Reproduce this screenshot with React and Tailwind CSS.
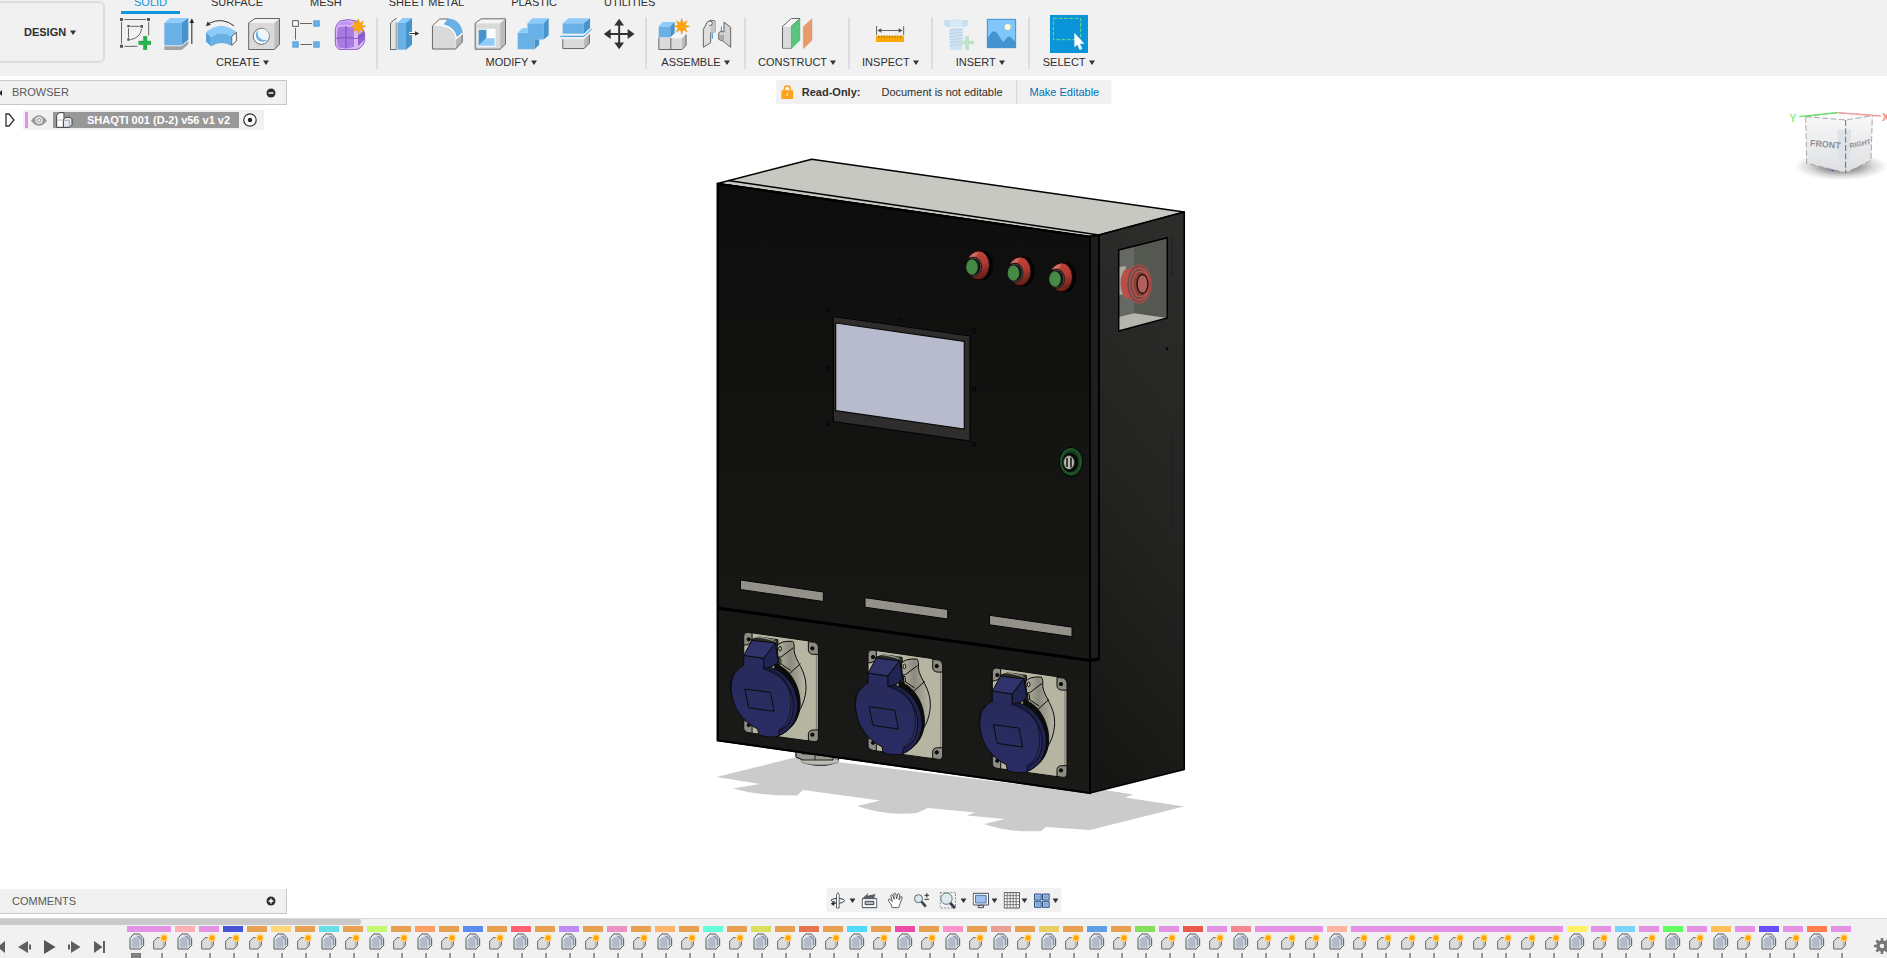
import React from "react";

const LIGHT = "#8ccbfa";
const MID = "#68b0e6";
const DARK = "#4793cc";

function Caret() {
  return (
    <svg width="6" height="5" viewBox="0 0 6 5" className="shrink-0" aria-hidden="true">
      <path d="M0 0.5h6L3 5z" fill="#333" />
    </svg>
  );
}

function starPoints(cx, cy, outer, inner) {
  const pts = [];
  for (let i = 0; i < 16; i++) {
    const r = i % 2 === 0 ? outer : inner;
    const a = (Math.PI / 8) * i;
    pts.push(`${(cx + r * Math.sin(a)).toFixed(1)},${(cy - r * Math.cos(a)).toFixed(1)}`);
  }
  return pts.join(" ");
}

function Tool({ label, box, children }) {
  return (
    <button type="button" aria-label={label} className="block size-8 shrink-0">
      <svg width="32" height="32" viewBox={box} aria-hidden="true">
        {children}
      </svg>
    </button>
  );
}

function Group({ label, pad = "px-2.5", children }) {
  return (
    <div className={`flex flex-col items-center ${pad}`}>
      <div className="mt-px flex h-8 items-center gap-[11px]">{children}</div>
      <button type="button" className="mt-1 flex items-center gap-[3px] leading-4">
        {label}
        <Caret />
      </button>
    </div>
  );
}

function Separator() {
  return <div className="h-[52px] w-[2px] shrink-0 bg-[#dcdcdc]" />;
}

function CreateGroup() {
  return (
    <Group label="CREATE">
      <Tool label="Create sketch" box="357 54 96 96">
        <g fill="#555">
          <path d="M360 54h9v9h-9zM441 54h9v9h-9zM360 134h9v9h-9zM382 75h7v7h-7zM421 75h8v8h-8zM382 115h7v7h-7z" />
        </g>
        <g fill="none" stroke="#666" strokeWidth="3">
          <path d="M373 58.500H438M446 66V106M364.500 66V131M373 139H412" />
          <path d="M391 79H419M385.500 85V113M425 86Q421 114 391 119" />
        </g>
        <path d="M430 109h11v14h13v11h-13v15h-11v-15h-14v-11h14z" fill="#25b24e" stroke="#1c9440" strokeWidth="1" />
      </Tool>
      <Tool label="Extrude" box="485 54 96 96">
        <path d="M492 139H544L564 123V133L544 150H492Z" fill="#a2a2a2" />
        <path d="M492 68H544V136H492Z" fill={MID} />
        <path d="M492 68L509 54H564L544 68Z" fill={LIGHT} />
        <path d="M544 68L564 54V119L544 136Z" fill={DARK} />
        <path d="M574.500 132V66" stroke="#222" strokeWidth="3" />
        <path d="M574.500 55L581 69H568Z" fill="#222" />
      </Tool>
      <Tool label="Bend" box="615 54 98 96">
        <path d="M704 77Q668 49 628 69" fill="none" stroke="#333" strokeWidth="3" />
        <path d="M618 78L623 64L633 74Z" fill="#333" />
        <path d="M618 97Q664 56 712 97L697 110Q664 88 634 112Z" fill={LIGHT} />
        <path d="M634 112Q664 88 696 110V138Q664 120 634 140Z" fill={MID} />
        <path d="M618 97L634 112V140L618 125Z" fill="#5aa3dc" />
        <path d="M697 109L711 97V124L697 137Z" fill="#fff" stroke="#555" strokeWidth="3" />
      </Tool>
      <Tool label="Hole" box="747 54 96 96">
        <path d="M749 69H826V149H749Z" fill="#dadada" />
        <path d="M749 69L768 55H842L826 69Z" fill="#f4f4f4" />
        <path d="M826 69L842 55V133L826 149Z" fill="#bcbcbc" />
        <path d="M749 149V69L768 55.500H841.500V133L826 148.500H749" fill="none" stroke="#666" strokeWidth="3" />
        <circle cx="787" cy="109" r="24" fill="#fff" stroke="#666" strokeWidth="3" />
        <path d="M775 92A20 20 0 1 0 806 118Q789 124 780 111Q775 102 777 91Z" fill={MID} />
        <path d="M777 91Q775 102 780 111Q789 124 806 118A20 20 0 0 0 777 91" fill="#eef6fc" />
      </Tool>
      <Tool label="Rectangular pattern" box="873 54 96 96">
        <path d="M878 62h17v17h-17z" fill="#fff" stroke="#555" strokeWidth="3" />
        <path d="M941 62h17v17h-17zM878 125h17v17h-17zM941 125h17v17h-17z" fill={MID} stroke="#4a94cf" strokeWidth="2" />
        <path d="M900 70.500H936M886.500 84V119M901 133.500H936" stroke="#666" strokeWidth="3" />
      </Tool>
      <Tool label="Create form" box="1002 54 96 96">
        <path d="M1022 62Q1046 55 1074 64L1094 98V122Q1088 144 1068 149H1020Q1004 144 1006 120V88Q1010 68 1022 62Z" fill="#d8baf6" stroke="#8c5cc4" strokeWidth="3" />
        <path d="M1014 82Q1040 76 1062 84V140Q1040 148 1014 142Q1008 112 1014 82Z" fill="#a87be2" />
        <path d="M1020 66Q1045 60 1060 68L1052 76Q1034 72 1014 78Z" fill="#c193f4" />
        <path d="M1074 104L1092 92V120L1074 138Z" fill="#9060d0" />
        <path d="M1038 78V146M1007 115Q1040 110 1070 116L1093 104" fill="none" stroke="#7645b4" strokeWidth="2.500" />
        <polygon points={starPoints(1075, 79, 23, 11)} fill="#ffa50a" stroke="#d98200" strokeWidth="1" />
      </Tool>
    </Group>
  );
}

function ModifyGroup() {
  return (
    <Group label="MODIFY">
      <Tool label="Press pull" box="54 54 96 96">
        <path d="M61.500 148.500V69L77 55.500H92L79 69V148.500Z" fill="#e4e4e4" stroke="#666" strokeWidth="3" />
        <path d="M80 54H96V149H80z" fill="#fff" />
        <path d="M82 69H108V149H82Z" fill={MID} />
        <path d="M82 69L97 54H126L108 69Z" fill={LIGHT} />
        <path d="M108 69L126 54V134L108 149Z" fill={DARK} />
        <path d="M118 100.500H138" stroke="#fff" strokeWidth="9" />
        <path d="M119 100.500H138" stroke="#333" strokeWidth="3" />
        <path d="M148 100.500L135 94V107Z" fill="#333" />
      </Tool>
      <Tool label="Fillet" box="183 54 99 96">
        <path d="M187 149V77H222Q258 82 259 118V149Z" fill="#dadada" />
        <path d="M187 77L210 55H238L222 75Z" fill="#f6f6f6" />
        <path d="M222 72L236 54Q276 58 281 98L261 114Q256 80 222 72Z" fill={MID} />
        <path d="M260 119L280 103V127L260 148Z" fill="#b8b8b8" />
        <path d="M236 55.500H210L187.500 77V148.500H259L279.500 127V101" fill="none" stroke="#666" strokeWidth="3" />
        <path d="M215 76Q258 80 261 116L281 100" fill="none" stroke="#fff" strokeWidth="4" />
      </Tool>
      <Tool label="Shell" box="313 54 98 96">
        <path d="M316 69H393V149H316Z" fill="#dadada" />
        <path d="M316 69L335 55H410L393 69Z" fill="#f4f4f4" />
        <path d="M393 69L410 55V133L393 149Z" fill="#bcbcbc" />
        <path d="M316.500 148.500V69L335 55.500H409.500V133L393 148.500Z" fill="none" stroke="#666" strokeWidth="3" />
        <path d="M324 86H379V141H324Z" fill="#fff" />
        <path d="M327 89H351V115L327 138Z" fill={DARK} />
        <path d="M351 115H376V138H327Z" fill={LIGHT} />
      </Tool>
      <Tool label="Combine" box="443 54 98 96">
        <path d="M445 98H475V69H525V119H497V149H445Z" fill={MID} />
        <path d="M475 69L490 54H540L525 69ZM445 98L460 84H475V98Z" fill={LIGHT} />
        <path d="M525 69L540 54V106L525 119ZM497 119H511V135L497 149Z" fill={DARK} />
      </Tool>
      <Tool label="Split body" box="572 54 98 96">
        <path d="M580 69H645V101H580Z" fill={MID} />
        <path d="M580 69L598 54H664L645 69Z" fill={LIGHT} />
        <path d="M645 69L664 54V84L645 101Z" fill={DARK} />
        <path d="M573 109H645L669 87" fill="none" stroke="#1590e8" strokeWidth="3" />
        <path d="M580.500 118H646L663 101V130L646 146.500H580.500Z" fill="#dadada" />
        <path d="M646 118L663 101V130L646 146Z" fill="#b8b8b8" />
        <path d="M580.500 118V146.500H646L662 130V104" fill="none" stroke="#666" strokeWidth="3" />
      </Tool>
      <Tool label="Move" box="701 53 97 98">
        <path d="M750 66V138M714 102H786" stroke="#333" strokeWidth="6" />
        <path d="M750 55L765 76H735ZM750 149L765 128H735ZM703 102L724 87V117ZM797 102L776 87V117Z" fill="#333" />
      </Tool>
    </Group>
  );
}

function AssembleGroup() {
  return (
    <Group label="ASSEMBLE" pad="px-[11px]">
      <Tool label="New component" box="113 54 96 96">
        <path d="M115 113H152V149H115ZM152 115H185V149H152Z" fill="#dadada" />
        <path d="M152 115L165 103H198L185 115Z" fill="#f4f4f4" />
        <path d="M185 115L198 103V136L185 149Z" fill="#bcbcbc" />
        <path d="M115.500 113V148.500H185L197 136V104M151.500 114V148" fill="none" stroke="#666" strokeWidth="3" />
        <path d="M115 79H150V112H115Z" fill={MID} />
        <path d="M115 79L127 66H163L150 79Z" fill={LIGHT} />
        <path d="M150 79L163 66V99L150 112Z" fill={DARK} />
        <polygon points={starPoints(184, 79, 24, 11)} fill="#ffa50a" stroke="#d98200" strokeWidth="1" />
      </Tool>
      <Tool label="Joint" box="243 54 96 96">
        <path d="M250 142V88L262 66Q272 57 285 63V96L272 98V128Z" fill="#dedede" stroke="#666" strokeWidth="3" />
        <path d="M272 70V98H286V64Z" fill="#c4c4c4" />
        <path d="M262 66Q276 60 277 70Q276 78 268 76" fill="#f2f2f2" stroke="#666" strokeWidth="3" />
        <path d="M332 142V82L312 66V96Q300 90 296 100V118L310 124Z" fill="#d2d2d2" stroke="#666" strokeWidth="3" />
        <path d="M297 102Q304 110 312 102V122L297 118Z" fill="#aaa" />
        <path d="M304 80V98M277 100V116" stroke="#2a90e0" strokeWidth="3" />
      </Tool>
    </Group>
  );
}

function ConstructGroup() {
  return (
    <Group label="CONSTRUCT" pad="px-3">
      <Tool label="Offset plane" box="483 54 96 96">
        <path d="M487.500 144.500V79L514 55.500H540L513 80V144.500Z" fill="#f6f6f6" stroke="#666" strokeWidth="3" />
        <path d="M489 80H513V143H489Z" fill="#dadada" />
        <path d="M514 80L540 56V121L514 146Z" fill="#57c57d" stroke="#3fa866" strokeWidth="1" />
        <path d="M550 80L576 56V121L550 146Z" fill="#e89a6b" stroke="#cd7f52" strokeWidth="1" />
      </Tool>
    </Group>
  );
}

function InspectGroup() {
  return (
    <Group label="INSPECT" pad="px-3">
      <Tool label="Measure" box="765 54 96 96">
        <path d="M772.500 78V105M854 78V105M780 91.500H846" stroke="#666" strokeWidth="3" />
        <path d="M775 91.500L787 85V98ZM851 91.500L839 85V98Z" fill="#555" />
        <path d="M771 107H855V126H771Z" fill="#ffa800" />
        <path d="M780 107v8M788 107v6M796 107v8M804 107v6M812 107v8M820 107v6M828 107v8M836 107v6M845 107v8" stroke="#7d6223" strokeWidth="2" />
      </Tool>
    </Group>
  );
}

function InsertGroup() {
  return (
    <Group label="INSERT">
      <Tool label="Insert fastener" box="975 54 96 96">
        <path d="M978 60H1050V74L1042 81H986L978 74Z" fill="#c9dff0" />
        <path d="M996 58H1034V81H996Z" fill="#d6e9f6" />
        <path d="M996 84H1034V145L1028 150H1001L996 145Z" fill="#cfe2f1" />
        <path d="M993 92L1036 88M993 101L1036 97M993 110L1036 106M993 119L1036 115M993 128L1030 124M995 137L1030 133" stroke="#bdd5e7" strokeWidth="3" />
        <path d="M1041 108h12v14h15v11h-15v17h-12v-17h-14v-11h14z" fill="#bfe3c8" />
      </Tool>
      <Tool label="Insert image" box="1101 54 96 96">
        <path d="M1105 58H1190V143H1105Z" fill="#80c6fb" stroke="#3e8fce" strokeWidth="3" />
        <path d="M1105 118Q1114 100 1122 94Q1132 90 1146 118L1154 126Q1166 106 1173 110Q1180 114 1190 128V143H1105Z" fill="#4293cf" />
        <circle cx="1166" cy="81" r="9" fill="#fffac4" />
      </Tool>
    </Group>
  );
}

function SelectGroup() {
  return (
    <Group label="SELECT" pad="px-[13px]">
      <button type="button" aria-label="Select" className="block size-[38px] shrink-0 bg-[#0a95d9]">
        <svg width="38" height="38" viewBox="1290 45 114 114" aria-hidden="true">
          <path d="M1300 55H1382V119H1300Z" fill="none" stroke="#6edc8a" strokeWidth="3" strokeDasharray="11 5" />
          <path d="M1363 98V142L1372 134L1379 150L1387 146L1380 131H1393Z" fill="#fff" />
        </svg>
      </button>
    </Group>
  );
}

const TABS = ["SOLID", "SURFACE", "MESH", "SHEET METAL", "PLASTIC", "UTILITIES"];

function Toolbar() {
  return (
    <header className="flex h-[76px] shrink-0 bg-[#f1f1f1]">
      <button
        type="button"
        className="mt-px flex h-[62px] w-[105px] shrink-0 items-center gap-1 rounded-r-md border-2 border-l-0 border-[#dcdcdc] pl-6 font-bold"
      >
        DESIGN
        <Caret />
      </button>
      <div className="ml-1">
        <nav className="-mt-1.5 ml-3 flex h-5 gap-[21px]">
          {TABS.map((tab) => (
            <a
              key={tab}
              href="#"
              className={
                tab === "SOLID"
                  ? "-mr-[3px] border-b-[3px] border-[#0d96d8] px-[13px] leading-4 text-[#0d96d8]"
                  : "px-[13px] leading-4"
              }
            >
              {tab}
            </a>
          ))}
        </nav>
        <div className="mt-[3px] flex">
          <CreateGroup />
          <Separator />
          <ModifyGroup />
          <Separator />
          <AssembleGroup />
          <Separator />
          <ConstructGroup />
          <Separator />
          <InspectGroup />
          <Separator />
          <InsertGroup />
          <Separator />
          <SelectGroup />
        </div>
      </div>
    </header>
  );
}

function PanelBadge({ plus }) {
  return (
    <svg width="10" height="10" viewBox="0 0 10 10" aria-hidden="true">
      <circle cx="5" cy="5" r="4.500" fill="#2d2d2d" />
      <path d={plus ? "M2.500 5h5M5 2.500v5" : "M2.500 5h5"} stroke="#fff" strokeWidth="1.400" />
    </svg>
  );
}

function BrowserPanel() {
  return (
    <section className="absolute left-0 top-1">
      <div className="flex h-[25px] w-[287px] items-center border border-l-0 border-[#c8c8c8] bg-[#f1f1f1] text-[#5a5a5a]">
        <svg width="2" height="6" viewBox="0 0 2 6" aria-hidden="true">
          <path d="M2 0V6L0 4V2Z" fill="#222" />
        </svg>
        <h2 className="ml-2.5 flex-1">BROWSER</h2>
        <button type="button" aria-label="Collapse browser" className="mr-2.5">
          <PanelBadge />
        </button>
      </div>
      <div className="mt-[5px] flex h-5 items-center">
        <button type="button" aria-label="Expand" className="ml-[5px] w-[18px]">
          <svg width="10" height="14" viewBox="0 0 10 14" aria-hidden="true">
            <path d="M1 1L4 1L9 7L4 13H1Z" fill="#fff" stroke="#333" strokeWidth="1.300" />
          </svg>
        </button>
        <div className="flex h-5 w-[241px] items-center bg-[#f1f1f1] pl-[2px]">
          <span className="h-4 w-[3px] bg-[#e58fe6]" />
          <button type="button" aria-label="Toggle visibility" className="ml-[3px]">
            <svg width="16" height="11" viewBox="0 0 48 33" aria-hidden="true">
              <path d="M0 17Q24 -16 48 17Q24 48 0 17Z" fill="#9a9a9a" />
              <circle cx="24" cy="16" r="9" fill="none" stroke="#f1f1f1" strokeWidth="3.500" />
              <circle cx="24" cy="16" r="4" fill="#f1f1f1" />
            </svg>
          </button>
          <div className="ml-1.5 flex h-4 w-[186px] items-center bg-[#989898] pl-[3px]">
            <svg width="17" height="16" viewBox="0 0 51 48" aria-hidden="true">
              <g fill="#fff" stroke="#3a3f46" strokeWidth="3" strokeLinejoin="round">
                <path d="M2 10L9 2H24V22V46H2Z" />
                <path d="M22 24L28 16H42L48 22V38L40 46H22Z" fill="#e4e8ec" />
              </g>
              <path d="M24 3V22M22 25H40V45M2 24H21" fill="none" stroke="#8b929a" strokeWidth="2" />
            </svg>
            <span className="ml-3.5 font-bold leading-4 whitespace-nowrap text-white">SHAQTI 001 (D-2) v56 v1 v2</span>
          </div>
          <button type="button" aria-label="Activate component" className="ml-1">
            <svg width="14" height="14" viewBox="0 0 14 14" aria-hidden="true">
              <circle cx="7" cy="7" r="6.200" fill="#fff" stroke="#333" strokeWidth="1.200" />
              <circle cx="7" cy="7" r="2.200" fill="#222" />
            </svg>
          </button>
        </div>
      </div>
    </section>
  );
}

function ReadOnlyBar() {
  return (
    <div className="absolute left-1/2 top-1 flex h-6 -translate-x-1/2 items-center whitespace-nowrap bg-[#f1f1f1] pl-[5px] pr-3">
      <svg width="12" height="14" viewBox="0 0 36 42" aria-hidden="true">
        <path d="M9 18V11Q9 3 18 3T27 11V18" fill="none" stroke="#fca01d" strokeWidth="4.500" />
        <path d="M0 16H36V42H0Z" fill="#fca01d" />
        <path d="M16 24h4v10h-4z" fill="#f9dcae" />
      </svg>
      <strong className="ml-[9px]">Read-Only:</strong>
      <span className="ml-[21px]">Document is not editable</span>
      <span className="ml-3.5 h-6 w-px bg-[#d4d4d4]" />
      <a href="#" className="ml-3 text-[#0070b5]">
        Make Editable
      </a>
    </div>
  );
}

function ViewCube() {
  return (
    <svg
      className="absolute right-0 top-3.5 font-['Liberation_Sans',sans-serif]"
      width="127"
      height="100"
      viewBox="0 0 381 300"
      role="img"
      aria-label="View cube"
    >
      <defs>
        <radialGradient id="cube-shadow">
          <stop offset="0.300" stopColor="#000" stopOpacity="0.450" />
          <stop offset="0.700" stopColor="#000" stopOpacity="0.140" />
          <stop offset="1" stopColor="#000" stopOpacity="0" />
        </radialGradient>
        <linearGradient id="cube-face" x1="0" y1="0" x2="0" y2="1">
          <stop offset="0" stopColor="#f8f8f9" />
          <stop offset="1" stopColor="#dedfe1" />
        </linearGradient>
      </defs>
      <ellipse cx="243" cy="229" rx="140" ry="42" fill="url(#cube-shadow)" />
      <path d="M137 80L230 68L337 76L257 90Z" fill="#fafafa" />
      <path d="M137 80L257 90V248L140 220Z" fill="url(#cube-face)" />
      <path d="M257 90L337 77L333 212L257 248Z" fill="url(#cube-face)" />
      <path d="M233 118L257 121L273 117V212L257 218L233 212Z" fill="#dfe3e9" />
      <g fill="none" stroke="#9a9a9a" strokeWidth="2.500" strokeDasharray="18 7">
        <path d="M137 80L257 90L337 77M137 80L140 220L257 248L333 212L337 77" />
        <path d="M257 90V248" stroke="#555" />
        <path d="M137 80L230 68L337 76" />
      </g>
      <path d="M118 80L232 68" stroke="#5be35b" strokeWidth="4" />
      <path d="M232 68L362 78" stroke="#f59a9a" strokeWidth="4" />
      <path d="M214 241H222" stroke="#4040e0" strokeWidth="3" />
      <text x="88" y="95" fontSize="33" fontWeight="bold" fill="#8cf08c">Y</text>
      <text x="366" y="92" fontSize="33" fontWeight="bold" fill="#f58a8a">X</text>
      <text x="149" y="168" fontSize="27" fontWeight="bold" fill="#8d9198" transform="rotate(5 149 168)">FRONT</text>
      <text x="270" y="175" fontSize="21" fontWeight="bold" fill="#8d9198" transform="rotate(-12 270 175)">RIGHT</text>
    </svg>
  );
}

function Socket({ dx, dy }) {
  return (
    <g transform={`translate(${709.400 + dx} ${619.700 + dy}) scale(0.3333)`} stroke="#0b0b0b" strokeWidth="3" strokeLinejoin="round">
      <path d="M103 50Q104 37 118 38L314 66Q327 70 327 84V354Q326 367 314 366L118 339Q103 336 103 324Z" fill="#b6b5a2" />
      <path d="M321 78V360" stroke="#77766a" strokeWidth="3" />
      <g fill="#8d8c83">
        <path d="M297 66L316 68Q327 72 327 84V104H310Q297 102 297 90Z" />
        <path d="M327 331H311Q297 332 297 344V363L314 366Q327 367 327 354Z" />
        <path d="M103 76V50Q104 37 118 38L128 40V60Q126 74 112 76Z" />
        <path d="M103 303L115 304Q128 308 128 322V340L118 339Q103 336 103 324Z" />
      </g>
      <g fill="#0b0b0b">
        <circle cx="309" cy="86" r="5" />
        <circle cx="309" cy="345" r="5" />
        <circle cx="118" cy="59" r="5" />
        <circle cx="118" cy="316" r="5" />
      </g>
      <path d="M126 60L150 52L205 60L210 135L160 130Z" fill="#2a2a28" />
      <path d="M140 52L196 60M150 50L200 66" stroke="#b6b5a2" strokeWidth="2" />
      <path
        d="M202 80Q212 62 250 65Q256 72 254 92C258 126 290 150 290 202C289 240 276 262 268 276L232 190L205 138L215 132L214 118L203 112Z"
        fill="url(#hinge)"
      />
      <path d="M215 112L252 84M231 170L273 132M214 132L243 152M203 76L206 112L215 112" fill="none" />
      <ellipse cx="212" cy="87" rx="4" ry="7" fill="#c8c7b6" />
      <path d="M196 132C238 144 274 196 272 258C270 300 244 334 208 346L196 260Z" fill="#0b0b0b" />
      <path d="M170 140C222 148 266 200 265 262C262 306 240 336 208 348L140 300L90 160Q110 140 170 140Z" fill="#1f2352" />
      <path d="M103 138L70 160Q58 200 66 222L90 160Z" fill="#1f2352" />
      <path
        d="M103 137C76 150 62 180 66 214C70 264 100 306 145 328L148 345C164 352 190 354 208 350V334C236 322 254 296 252 254C250 204 216 164 163 147V140Z"
        fill="url(#cover)"
      />
      <path d="M176 146C220 160 245 202 245 252C244 290 231 318 208 330" fill="none" strokeWidth="2" />
      <path d="M103 107L163 116V147L103 138Z" fill="#282b5e" stroke="none" />
      <path d="M103 138V107L163 116V147" fill="none" />
      <path d="M103 107L128 62L198 70L163 116Z" fill="#2f3369" />
      <path d="M163 116L198 70L206 126L190 140L163 147Z" fill="#212553" />
      <path d="M106 208L183 218L194 275L118 264Z" fill="none" />
    </g>
  );
}

function PushButton({ dx, dy }) {
  return (
    <g transform={`translate(${dx} ${dy})`}>
      <ellipse cx="983" cy="265" rx="10.500" ry="15" fill="#030303" />
      <ellipse cx="979" cy="265" rx="11" ry="14.500" fill="url(#lamp)" stroke="#120505" strokeWidth="1" />
      <path d="M969 257Q973 252 979 252L975 258Z" fill="#d58a80" opacity="0.600" />
      <ellipse cx="974" cy="266.500" rx="8.500" ry="10" fill="#151515" />
      <ellipse cx="974.500" cy="266.500" rx="6.800" ry="8.500" fill="none" stroke="#4c4c44" strokeWidth="1" />
      <ellipse cx="972.500" cy="266.700" rx="5.800" ry="7.600" fill="#468a46" />
    </g>
  );
}

const SCREWS = [
  [828, 310],
  [901, 320.300],
  [974, 330.700],
  [828, 368.300],
  [974, 389],
  [828, 423.300],
  [974, 444.300],
];

function CabinetModel() {
  return (
    <svg width="499" height="842" viewBox="694 76 499 842" className="shrink-0" role="img" aria-label="Cabinet model">
      <defs>
        <linearGradient id="front" x1="0" y1="0" x2="0" y2="1">
          <stop offset="0" stopColor="#0d0d0d" />
          <stop offset="0.450" stopColor="#141412" />
          <stop offset="1" stopColor="#1a1a18" />
        </linearGradient>
        <linearGradient id="side" x1="0.600" y1="0" x2="0.400" y2="1">
          <stop offset="0" stopColor="#2c2c2b" />
          <stop offset="0.500" stopColor="#232322" />
          <stop offset="1" stopColor="#161614" />
        </linearGradient>
        <linearGradient id="lamp" x1="0" y1="0" x2="0.300" y2="1">
          <stop offset="0" stopColor="#c8483c" />
          <stop offset="0.600" stopColor="#ad3a30" />
          <stop offset="1" stopColor="#6a211b" />
        </linearGradient>
        <linearGradient id="cover" x1="0" y1="0" x2="0" y2="1">
          <stop offset="0" stopColor="#272a59" />
          <stop offset="1" stopColor="#2a2d65" />
        </linearGradient>
        <linearGradient id="hinge" x1="0" y1="0" x2="1" y2="0">
          <stop offset="0" stopColor="#b4b3a1" />
          <stop offset="0.450" stopColor="#8b8a7f" />
          <stop offset="1" stopColor="#b8b7a6" />
        </linearGradient>
      </defs>

      <path
        d="M716.500 777L797 757L1090 793L1105 790L1133 794.500L1125 797.500L1184 806.500L1090 830L1046 827L1041 831Q1010 833 984 824L1005 819L967 815.500L975 812.500L928 808L917 813Q885 816 857 806L880 800.500L803 790L797 795.500Q760 796 733 788.500L760 784Z"
        fill="#cbcbcb"
      />
      <path d="M796 748V757L803 760Q806 765 820 765.500T840 758V752Z" fill="#8f8e88" stroke="#222" strokeWidth="1" />
      <ellipse cx="820" cy="761" rx="19" ry="4" fill="#bdbcb5" stroke="#666" strokeWidth="0.700" />
      <path d="M796 750V757L803 760H833V754H803Z" fill="#99988f" stroke="#222" strokeWidth="1" />
      <path d="M815 752V760" stroke="#222" strokeWidth="1" />

      <g stroke="#000" strokeWidth="1.500" strokeLinejoin="round">
        <path d="M717.500 183.500L811.700 159.300L1184.300 212L1099 235L1090 236.500Z" fill="#c6c8c1" />
        <path d="M1099 235L1184.300 212V769.500L1090 793V236.500Z" fill="url(#side)" />
        <path d="M717.500 183.500L1090 236.500V793L717.500 740.500Z" fill="url(#front)" />
        <path d="M1090 236.500L1099 235V659L1090 660.500Z" fill="#1d1d1b" />
        <path d="M728 180.500L1099 235" fill="none" />
      </g>
      <path d="M717.500 608L1090 660.500L1099 659" fill="none" stroke="#000" strokeWidth="3" />
      <path d="M1099 235V659.500" stroke="#000" strokeWidth="2" />
      <path d="M717.700 184V740.500L1090 793V237ZM717.700 184L1090 237" fill="none" stroke="#000" strokeWidth="2" />

      <PushButton dx={-0.500} dy={0.300} />
      <PushButton dx={41} dy={6.300} />
      <PushButton dx={82.500} dy={12.300} />

      <g fill="#151515" stroke="#000" strokeWidth="1">
        {SCREWS.map(([x, y]) => (
          <ellipse key={`${x}-${y}`} cx={x} cy={y} rx="1.700" ry="2.200" />
        ))}
      </g>
      <path d="M833.300 316.500L970 336V441L833.300 421.500Z" fill="#2e2d2b" stroke="#050505" strokeWidth="1.200" />
      <path d="M835.700 323L964.300 341.300V429L835.700 410.700Z" fill="#b8bbce" stroke="#0a0a0a" strokeWidth="1.200" />

      <ellipse cx="1071" cy="462" rx="11.500" ry="14.500" fill="#14381a" stroke="#000" strokeWidth="1" />
      <ellipse cx="1071" cy="461.500" rx="9.800" ry="12.300" fill="none" stroke="#1f5226" strokeWidth="2.600" />
      <ellipse cx="1070" cy="462.500" rx="8" ry="9.500" fill="#080808" />
      <ellipse cx="1069" cy="462.500" rx="5.500" ry="7" fill="#b9b8ac" stroke="#2d2d2b" strokeWidth="1" />
      <path d="M1067 458v9M1071 457.500v10" stroke="#111" strokeWidth="1.500" />

      <g fill="#94918a" stroke="#050505" strokeWidth="1">
        <path d="M740.500 580L823.300 592V601.500L740.500 589.500Z" />
        <path d="M865 597.700L947.700 609.500V619L865 607.200Z" />
        <path d="M989.500 615.300L1072 627.200V636.700L989.500 624.800Z" />
      </g>

      <path d="M1118.700 250L1167.300 237.700V318L1118.700 331Z" fill="#555751" />
      <path d="M1118.700 250L1134.300 246V313.500L1118.700 317Z" fill="#666963" />
      <path d="M1118.700 317L1134.300 313.300L1167.300 318L1118.700 331Z" fill="#b4b6ae" />
      <path d="M1119 267L1126 266V294L1119 295Z" fill="#a9a9a4" />
      <ellipse cx="1128" cy="283.300" rx="7.500" ry="15" fill="#b8504a" />
      <ellipse cx="1139" cy="284" rx="12" ry="19" fill="#6d4a45" stroke="#b04c47" strokeWidth="1.200" />
      <ellipse cx="1139.500" cy="284" rx="9.800" ry="16" fill="none" stroke="#b9514c" strokeWidth="1.300" />
      <ellipse cx="1140.500" cy="284" rx="7.800" ry="13" fill="#85423e" stroke="#c05a55" strokeWidth="1.200" />
      <ellipse cx="1142.500" cy="284" rx="5.500" ry="9.500" fill="#b2605b" stroke="#1c0c0b" strokeWidth="1.300" />
      <path d="M1118.700 250L1167.300 237.700V318L1118.700 331Z" fill="none" stroke="#000" strokeWidth="1.500" />
      <circle cx="1167" cy="348.700" r="1.200" fill="#000" />
      <path d="M1172 237V276M1172 431V530M1172 604V643" stroke="#1f1f1e" strokeWidth="1" />

      <Socket dx={0} dy={0} />
      <Socket dx={124.300} dy={17.700} />
      <Socket dx={248.600} dy={35.700} />
    </svg>
  );
}

function NavButton({ label, width = 16, caretGap, children }) {
  return (
    <button type="button" aria-label={label} className={`flex items-center ${caretGap || ""}`}>
      <svg width={width} height="17" viewBox={`0 0 ${width * 3} 51`} aria-hidden="true">
        {children}
      </svg>
      {caretGap ? <Caret /> : null}
    </button>
  );
}

function NavigationBar() {
  return (
    <div className="absolute bottom-1.5 left-1/2 flex h-6 -translate-x-1/2 items-center gap-2.5 bg-[#f1f1f1] pl-[3px] pr-[3px]">
      <div className="flex gap-1.5">
        <NavButton label="Orbit" caretGap="gap-1">
          <path d="M18 31Q-2 26 8 22Q24 14 42 22Q52 28 30 34H10" fill="none" stroke="#3a4048" strokeWidth="3" />
          <path d="M4 35L14 28V42Z" fill="#222" />
          <path d="M21 48V8L25 2L29 8V48Z" fill="#fff" stroke="#3a4048" strokeWidth="2.500" />
        </NavButton>
        <NavButton label="Look at">
          <path d="M3 19L20 3L18 11L42 6L38 18Z" fill="#555d66" />
          <path d="M2 20H46V47H2Z" fill="#fff" stroke="#3d444c" strokeWidth="3" />
          <path d="M11 28H37V38H11Z" fill="#b4bcc6" stroke="#3d444c" strokeWidth="3" />
        </NavButton>
      </div>
      <NavButton label="Pan">
        <path
          d="M14 47Q12 36 3 27Q0 22 5 21Q10 22 14 29L10 11Q11 6 15 9L20 22L19 5Q22 1 25 5L27 21L31 6Q35 3 37 8L34 24L40 14Q45 13 44 18L38 34Q36 42 33 47Z"
          fill="#fff"
          stroke="#3d444c"
          strokeWidth="2.500"
        />
      </NavButton>
      <NavButton label="Zoom">
        <circle cx="15" cy="20" r="12" fill="#dceaf0" stroke="#5a646e" strokeWidth="3" />
        <path d="M24 29L37 44" stroke="#3a4654" strokeWidth="8" />
        <path d="M40 3V17M33 10H47M33 22H47" stroke="#333" strokeWidth="3" />
      </NavButton>
      <div className="flex gap-1.5">
        <NavButton label="Zoom window" width={17} caretGap="gap-1">
          <path d="M2 2H48V48H2Z" fill="none" stroke="#777" strokeWidth="2.500" strokeDasharray="6 4" />
          <circle cx="21" cy="20" r="17" fill="#dceaf0" stroke="#6a747e" strokeWidth="3" />
          <path d="M32 33L46 48" stroke="#333d49" strokeWidth="8" />
        </NavButton>
        <NavButton label="Display settings" width={17} caretGap="gap-[2px]">
          <path d="M2 4H48V39H2Z" fill="#fff" stroke="#4a5058" strokeWidth="3" />
          <path d="M9 10H41V33H9Z" fill="#9dc0ee" stroke="#355f9e" strokeWidth="2.500" />
          <path d="M17 40H33V47H17Z" fill="#ddd" stroke="#4a5058" strokeWidth="3" />
        </NavButton>
        <NavButton label="Grid and snaps" width={17} caretGap="gap-px">
          <path d="M2 2H48V48H2Z" fill="#fff" stroke="#50565c" strokeWidth="3" />
          <path d="M11 2V48M20 2V48M29 2V48M38 2V48M2 11H48M2 20H48M2 29H48M2 38H48" stroke="#7a7a7a" strokeWidth="3" />
        </NavButton>
        <NavButton label="Viewports" width={17} caretGap="gap-[2px]">
          <g fill="#a6c3e8" stroke="#2f4f80" strokeWidth="3">
            <path d="M3 6H23V24H3ZM27 6H47V24H27ZM3 28H23V46H3ZM27 28H47V46H27Z" />
          </g>
          <path d="M9 12h8v6H9zM33 12h8v6h-8zM9 34h8v6H9zM33 34h8v6h-8z" fill="none" stroke="#5f86bd" strokeWidth="2" />
        </NavButton>
      </div>
    </div>
  );
}

function CommentsPanel() {
  return (
    <section className="absolute bottom-1 left-0 flex h-[25px] w-[287px] items-center border-b border-r border-[#c8c8c8] bg-[#f1f1f1] text-[#5a5a5a]">
      <h2 className="ml-3 flex-1">COMMENTS</h2>
      <button type="button" aria-label="Add comment" className="mr-2.5">
        <PanelBadge plus />
      </button>
    </section>
  );
}

const P = "#e392e6";
const O = "#e8a051";

// Each segment is one colour strip; "b" marks a body feature, "s" a new-component feature.
const SEGMENTS = [
  [P, "bs"], ["#ffb0b5", "b"], [P, "s"], ["#4655d8", "s"], [O, "s"], ["#ffd77a", "b"], [O, "s"],
  ["#66dfe6", "b"], [O, "s"], ["#c5f86d", "b"], [O, "s"], ["#ff9f68", "b"], [O, "s"], ["#5c8cee", "b"],
  [O, "s"], ["#ff6170", "b"], [O, "s"], ["#c08cf3", "b"], [O, "s"], ["#ea92c1", "b"], [O, "s"],
  ["#ffb56e", "b"], [O, "s"], ["#66ffdc", "b"], [O, "s"], ["#d8e05b", "b"], [O, "s"], ["#e9724f", "b"],
  [O, "s"], ["#52daf9", "b"], [O, "s"], ["#ea4ca5", "b"], [O, "s"], ["#fc93cd", "b"], [O, "s"],
  ["#e8a093", "b"], [O, "s"], ["#e9cf63", "b"], [O, "s"], ["#5f9ee3", "b"], [O, "s"], ["#85df5b", "b"],
  [P, "s"], ["#e85a4e", "b"], [P, "s"], ["#f4868f", "b"], [P, "sss"], ["#ffb59f", "b"], [P, "sssssssss"],
  ["#fff066", "b"], [P, "s"], ["#79d3fb", "b"], [P, "s"], ["#63ff62", "b"], [P, "s"], ["#ffc057", "b"],
  [P, "s"], ["#6a50f9", "b"], [P, "s"], ["#ff7d50", "b"], [P, "s"],
];

function BodyFeature() {
  return (
    <svg width="16" height="17" viewBox="0 0 48 51" aria-hidden="true">
      <path d="M3 48V16L14 3H32L44 17V37L33 48Z" fill="#e9ebef" stroke="#50545a" strokeWidth="3" />
      <path d="M8 44V20L16 12H26L32 20V44Z" fill="#b4bbc8" />
      <path d="M22 8H31L40 18V35L34 42V21L25 11Z" fill="#8b94a3" />
      <path d="M25 11L34 21V44" fill="none" stroke="#e4e7ec" strokeWidth="2" />
    </svg>
  );
}

function ComponentFeature() {
  return (
    <svg width="17" height="17" viewBox="0 0 51 51" aria-hidden="true">
      <path d="M2 48V25L12 14H27L37 24V37L27 48Z" fill="#dcdcdc" stroke="#666" strokeWidth="3" />
      <path d="M29 26L36 21V37L29 45Z" fill="#b5b5b5" />
      <polygon points={starPoints(33, 15, 16, 9)} fill="#fff0b8" />
      <polygon points={starPoints(33, 15, 15, 6)} fill="#ffa200" />
    </svg>
  );
}

function Transport() {
  return (
    <div className="flex h-4 items-center">
      <button type="button" aria-label="Go to start">
        <svg width="6" height="14" viewBox="0 0 6 14" aria-hidden="true">
          <path d="M5 1V13L0 9V5Z" fill="#5f5f5f" />
        </svg>
      </button>
      <button type="button" aria-label="Step back" className="ml-3">
        <svg width="13" height="14" viewBox="0 0 13 14" aria-hidden="true">
          <path d="M10 1V13L0 7Z" fill="#5f5f5f" />
          <path d="M11 4.500h2v5h-2z" fill="#5f5f5f" />
        </svg>
      </button>
      <button type="button" aria-label="Play" className="ml-[13px]">
        <svg width="12" height="16" viewBox="0 0 12 16" aria-hidden="true">
          <path d="M0 1L11.500 8L0 15Z" fill="#555" />
        </svg>
      </button>
      <button type="button" aria-label="Step forward" className="ml-3">
        <svg width="13" height="14" viewBox="0 0 13 14" aria-hidden="true">
          <path d="M3 1V13L12.500 7Z" fill="#5f5f5f" />
          <path d="M0 4.500h2v5H0z" fill="#5f5f5f" />
        </svg>
      </button>
      <button type="button" aria-label="Go to end" className="ml-[13px]">
        <svg width="11" height="14" viewBox="0 0 11 14" aria-hidden="true">
          <path d="M0 1V13L8.500 7ZM9 1h2v12h-2z" fill="#5f5f5f" />
        </svg>
      </button>
    </div>
  );
}

function Timeline() {
  return (
    <footer className="flex h-10 shrink-0 flex-col overflow-hidden border-t border-[#d9d9d9] bg-[#f1f1f1]">
      <div className="-mt-px h-[7px] w-[361px] shrink-0 rounded-r-md bg-[#c9c9c9]" />
      <div className="flex flex-1 overflow-hidden">
        <div className="w-[127px] shrink-0 pt-[14px]">
          <Transport />
        </div>
        <div className="flex flex-1 gap-1 overflow-hidden pt-px">
          {SEGMENTS.map(([color, items], s) => (
            <div key={s} className="shrink-0">
              <div className="h-1.5" style={{ backgroundColor: color }} />
              <div className="flex gap-1">
                {items.split("").map((kind, i) => (
                  <div key={i} className="w-5">
                    <button
                      type="button"
                      aria-label={kind === "b" ? "Body feature" : "Component feature"}
                      className="ml-[2px] block h-[18px]"
                    >
                      {kind === "b" ? <BodyFeature /> : <ComponentFeature />}
                    </button>
                    {s === 0 && i === 0 ? (
                      <div className="ml-1 mt-[3px] h-2 w-[10px] border border-[#777] bg-[#858585]" />
                    ) : (
                      <div className="ml-[10px] mt-[3px] h-2 w-[2px] bg-[#999]" />
                    )}
                  </div>
                ))}
              </div>
            </div>
          ))}
        </div>
        <button type="button" aria-label="Timeline settings" className="mt-[13px] h-4 w-[13px] shrink-0 overflow-hidden">
          <svg width="16" height="16" viewBox="0 0 16 16" aria-hidden="true">
            <circle cx="8" cy="8" r="4" fill="none" stroke="#777" strokeWidth="3.500" />
            <g stroke="#777" strokeWidth="2.600">
              <path d="M8 0V3M8 13V16M0 8H3M13 8H16M2.300 2.300L4.500 4.500M11.500 11.500L13.700 13.700M2.300 13.700L4.500 11.500M11.500 4.500L13.700 2.300" />
            </g>
          </svg>
        </button>
      </div>
    </footer>
  );
}

export default function App() {
  return (
    <div className="flex h-screen flex-col overflow-hidden bg-white font-['Liberation_Sans',Arial,sans-serif] text-[11px] text-[#2f2f2f]">
      <Toolbar />
      <main className="relative flex flex-1 justify-center overflow-hidden">
        <CabinetModel />
        <BrowserPanel />
        <ReadOnlyBar />
        <ViewCube />
        <CommentsPanel />
        <NavigationBar />
      </main>
      <Timeline />
    </div>
  );
}
